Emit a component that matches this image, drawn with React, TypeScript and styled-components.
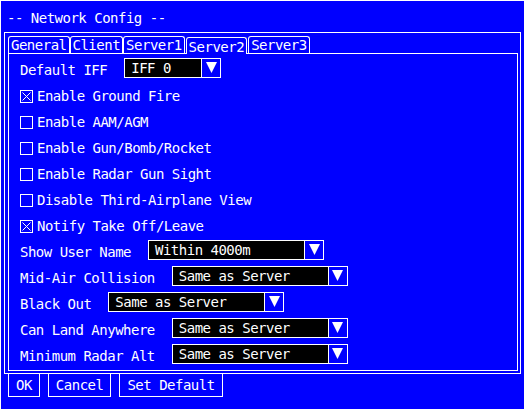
import React from "react";
import styled, { createGlobalStyle } from "styled-components";

const GlobalStyle = createGlobalStyle`
  html, body {
    margin: 0;
    padding: 0;
    background: #0000ff;
  }
  body {
    font-family: "DejaVu Sans Mono", "Liberation Mono", monospace;
    font-size: 14px;
    letter-spacing: -0.5px;
    color: #ffffff;
  }
`;

const tabs = ["General", "Client", "Server1", "Server2", "Server3"];
const activeTab = 3;

const toggles = [
    { label: "Enable Ground Fire", checked: true },
    { label: "Enable AAM/AGM", checked: false },
    { label: "Enable Gun/Bomb/Rocket", checked: false },
    { label: "Enable Radar Gun Sight", checked: false },
    { label: "Disable Third-Airplane View", checked: false },
    { label: "Notify Take Off/Leave", checked: true },
];

const choices = [
    { label: "Show User Name", value: "Within 4000m" },
    { label: "Mid-Air Collision", value: "Same as Server" },
    { label: "Black Out", value: "Same as Server" },
    { label: "Can Land Anywhere", value: "Same as Server" },
    { label: "Minimum Radar Alt", value: "Same as Server" },
];

const Dropdown: React.FC<{ value: string; width: number }> = ({ value, width }) => (
    <DropBox $width={width}>
        <DropField>{value}</DropField>
        <DropArrow>
            <svg width="11" height="11" viewBox="0 0 11 11">
                <polygon points="0,0 11,0 5.5,11" fill="#ffffff" />
            </svg>
        </DropArrow>
    </DropBox>
);

const CheckBox: React.FC<{ checked: boolean }> = ({ checked }) => (
    <BoxIcon width="13" height="13" viewBox="0 0 13 13">
        <rect x="0.5" y="0.5" width="12" height="12" fill="none" stroke="#ffffff" />
        {checked && (
            <path d="M2.5 2.5 L10.5 10.5 M10.5 2.5 L2.5 10.5" stroke="#ffffff" strokeWidth="1" />
        )}
    </BoxIcon>
);

export default function App() {
    return (
        <>
            <GlobalStyle />
            <Screen>
                <Title>-- Network Config --</Title>
                <Frame>
                    <TabRow>
                        {tabs.map((t, i) => (
                            <Tab key={t} $active={i === activeTab}>{t}</Tab>
                        ))}
                    </TabRow>
                    <Panel>
                        <SelectRow>
                            <Label>Default IFF</Label>
                            <Dropdown value="IFF 0" width={97} />
                        </SelectRow>
                        {toggles.map((t) => (
                            <ToggleRow key={t.label}>
                                <CheckBox checked={t.checked} />
                                <ToggleText>{t.label}</ToggleText>
                            </ToggleRow>
                        ))}
                        {choices.map((c) => (
                            <SelectRow key={c.label}>
                                <Label>{c.label}</Label>
                                <Dropdown value={c.value} width={176} />
                            </SelectRow>
                        ))}
                    </Panel>
                </Frame>
                <ButtonRow>
                    <Button>OK</Button>
                    <Button>Cancel</Button>
                    <Button>Set Default</Button>
                </ButtonRow>
            </Screen>
        </>
    );
}

const Screen = styled.div`
  width: 525px;
  height: 409px;
  box-sizing: border-box;
  border: 1px solid #ffffff;
  border-bottom: none;
  background: #0000ff;
  overflow: hidden;
`;

const Title = styled.div`
  padding: 7px 0 4px 6px;
  line-height: 20px;
  white-space: pre;
`;

const Frame = styled.div`
  margin-left: 3px;
  width: 517px;
  box-sizing: border-box;
  border: 1px solid #ffffff;
  padding: 3px 2px 2px 3px;
`;

const TabRow = styled.div`
  display: flex;
  align-items: flex-end;
  height: 17px;
`;

const Tab = styled.div<{ $active: boolean }>`
  border: 1px solid #ffffff;
  border-bottom: none;
  border-radius: 3px 3px 0 0;
  padding: ${p => (p.$active ? "3px 2px 0" : "0 2px")};
  line-height: ${p => (p.$active ? "13px" : "16px")};
  margin: ${p => (p.$active ? "0 1px -1px" : "0")};
  background: #0000ff;
  position: relative;
  z-index: ${p => (p.$active ? 1 : 0)};
  white-space: nowrap;
`;

const Panel = styled.div`
  height: 318px;
  box-sizing: border-box;
  border: 1px solid #ffffff;
  padding: 4px 0 0 11px;
`;

const SelectRow = styled.div`
  display: flex;
  align-items: flex-start;
  gap: 17px;
  height: 26px;
`;

const Label = styled.div`
  padding-top: 2px;
  line-height: 20px;
  white-space: nowrap;
`;

const ToggleRow = styled.div`
  display: flex;
  align-items: flex-start;
  gap: 4px;
  height: 26px;
`;

const BoxIcon = styled.svg`
  margin-top: 6px;
  flex-shrink: 0;
`;

const ToggleText = styled.div`
  line-height: 25px;
  white-space: nowrap;
`;

const DropBox = styled.div<{ $width: number }>`
  display: flex;
  width: ${p => p.$width}px;
  height: 20px;
  box-sizing: border-box;
  border: 1px solid #ffffff;
`;

const DropField = styled.div`
  flex: 1;
  background: #000000;
  padding-left: 6px;
  line-height: 18px;
  white-space: nowrap;
  overflow: hidden;
`;

const DropArrow = styled.div`
  width: 18px;
  border-left: 1px solid #ffffff;
  display: flex;
  justify-content: center;
  padding-top: 3px;
  box-sizing: content-box;
`;

const ButtonRow = styled.div`
  display: flex;
  gap: 8px;
  margin: -1px 0 0 7px;
`;

const Button = styled.button`
  font: inherit;
  letter-spacing: inherit;
  color: #ffffff;
  background: transparent;
  border: 1px solid #ffffff;
  border-radius: 0;
  height: 24px;
  line-height: 22px;
  padding: 0 7px;
  margin: 0;
`;
